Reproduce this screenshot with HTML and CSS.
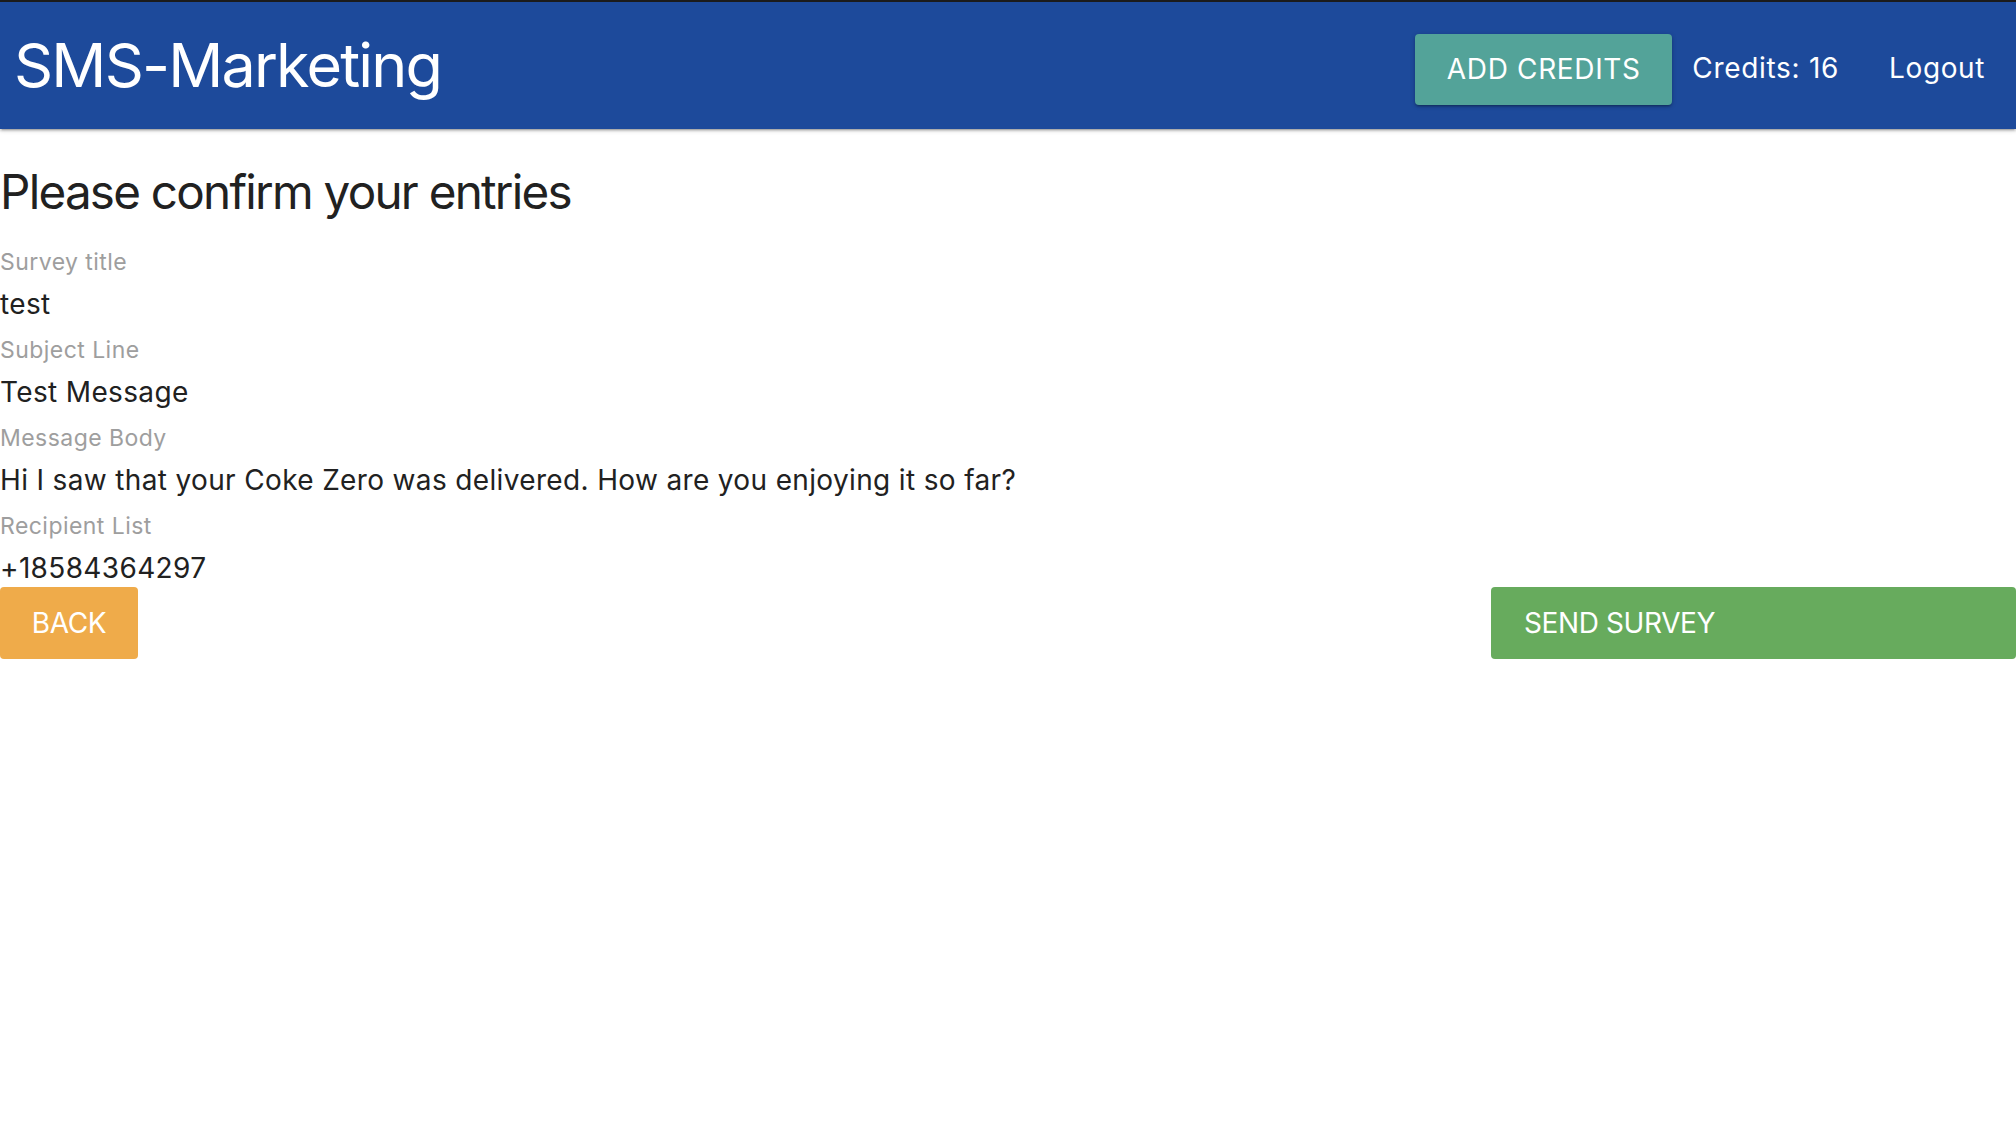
FILE: index.html
```html
<!DOCTYPE html>
<html lang="en">
<head>
<meta charset="utf-8">
<title>SMS-Marketing</title>
<link rel="stylesheet" href="styles.css">
</head>
<body>
<header class="nav">
  <a class="brand" href="#">SMS-Marketing</a>
  <ul class="nav-links">
    <li><a class="btn btn-teal" href="#">Add Credits</a></li>
    <li class="credits">Credits: 16</li>
    <li><a class="nav-link" href="#">Logout</a></li>
  </ul>
</header>
<main class="content">
  <h5 class="heading">Please confirm your entries</h5>
  <div class="field">
    <label class="field-label">Survey title</label>
    <div class="field-value">test</div>
  </div>
  <div class="field">
    <label class="field-label">Subject Line</label>
    <div class="field-value">Test Message</div>
  </div>
  <div class="field">
    <label class="field-label">Message Body</label>
    <div class="field-value">Hi I saw that your Coke Zero was delivered. How are you enjoying it so far?</div>
  </div>
  <div class="field">
    <label class="field-label">Recipient List</label>
    <div class="field-value">+18584364297</div>
  </div>
  <div class="actions">
    <button class="btn btn-back" type="button">Back</button>
    <button class="btn btn-send" type="button">Send Survey</button>
  </div>
</main>
</body>
</html>
```
FILE: styles.css
```css
html, body {
  margin: 0;
  padding: 0;
  background: #ffffff;
  font-family: "Inter", "Roboto", "Liberation Sans", sans-serif;
  color: rgba(0, 0, 0, 0.87);
}

.nav {
  box-sizing: border-box;
  height: 129px;
  border-top: 2px solid #1b1b1b;
  background: #1d4a9b;
  display: flex;
  align-items: center;
  justify-content: space-between;
  box-shadow: 0 2px 2px 0 rgba(0,0,0,0.14), 0 3px 1px -2px rgba(0,0,0,0.12), 0 1px 5px 0 rgba(0,0,0,0.2);
  position: relative;
  z-index: 1;
}

.brand {
  color: #ffffff;
  text-decoration: none;
  font-size: 61px;
  letter-spacing: -1.8px;
  padding-left: 14px;
  line-height: 1;
}

.nav-links {
  list-style: none;
  margin: 0;
  padding: 0 1px 0 0;
  display: flex;
  align-items: center;
  height: 100%;
}

.nav-links li {
  display: flex;
  align-items: center;
}

.nav-links li:first-child {
  padding-top: 7px;
}

.credits {
  color: #ffffff;
  font-size: 28px;
  letter-spacing: 0.7px;
  margin: 0 20px;
  padding-top: 5px;
}

.nav-link {
  color: #ffffff;
  text-decoration: none;
  font-size: 28px;
  letter-spacing: 0.6px;
  padding: 5px 30px 0 30px;
}

.btn {
  display: inline-flex;
  align-items: center;
  box-sizing: border-box;
  height: 72px;
  padding: 0 32px;
  border: none;
  border-radius: 4px;
  color: #ffffff;
  font-family: inherit;
  font-size: 28px;
  letter-spacing: -0.4px;
  text-transform: uppercase;
  text-decoration: none;
  cursor: pointer;
}

.btn-teal {
  background: #53a399;
  width: 257px;
  height: 71px;
  justify-content: center;
  padding: 0;
  letter-spacing: 0.65px;
  box-shadow: 0 2px 2px 0 rgba(0,0,0,0.14), 0 3px 1px -2px rgba(0,0,0,0.12), 0 1px 5px 0 rgba(0,0,0,0.2);
}

.content {
  padding: 0;
}

.heading {
  margin: 37px 0 19px 0;
  font-size: 47.6px;
  font-weight: 400;
  line-height: 110%;
  color: #212121;
  letter-spacing: -1.75px;
}

.field {
  display: flex;
  flex-direction: column;
}

.field-label {
  font-size: 23px;
  line-height: 41px;
  padding-top: 5px;
  letter-spacing: 0.45px;
  color: #9e9e9e;
}

.field-value {
  font-size: 28px;
  line-height: 42px;
  letter-spacing: 0.35px;
  color: #212121;
}

.actions {
  display: flex;
  justify-content: space-between;
  margin-top: -2px;
}

.btn-back {
  background: #efab4a;
  width: 138px;
  justify-content: center;
  padding: 0;
}

.btn-send {
  background: #67ab5d;
  width: 525px;
  padding-left: 33px;
  justify-content: flex-start;
}
```
